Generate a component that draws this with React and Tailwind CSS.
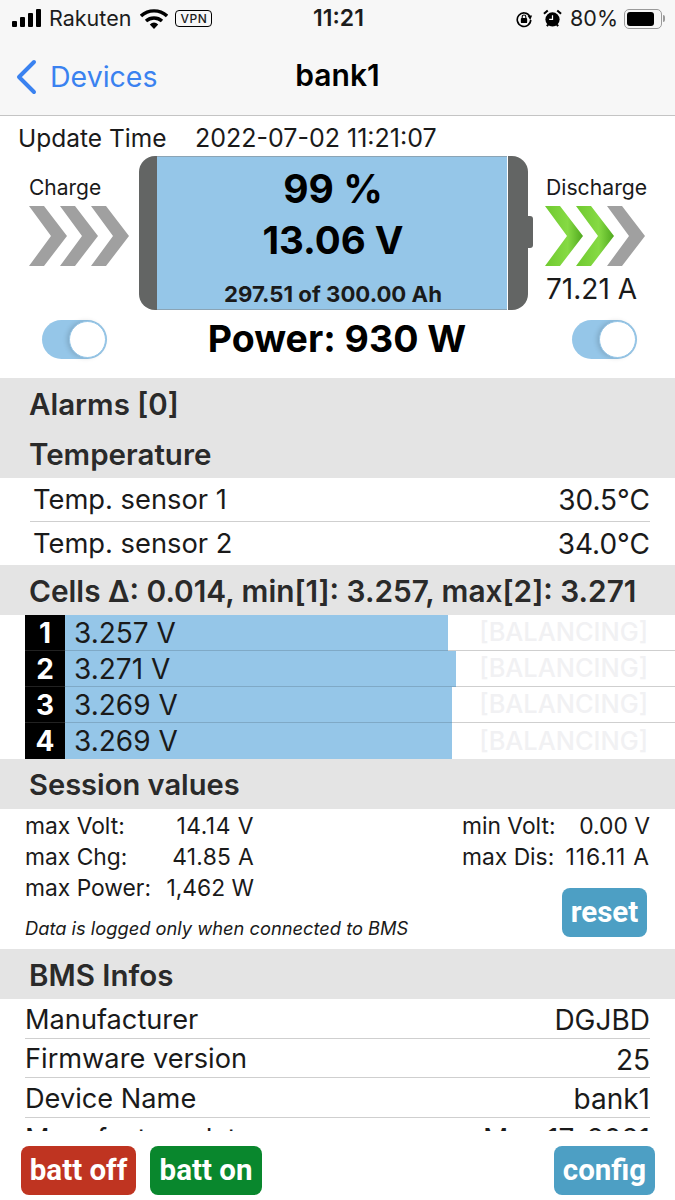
import React from "react";

const SANS = "font-['Inter','Noto_Sans',sans-serif]";

function Chevrons({ green = 0 }) {
  const xs = [0, 31, 62];
  return (
    <svg width="101" height="60" viewBox="0 0 101 60" className="block">
      <defs>
        <linearGradient id="g" x1="0" x2="1" y1="0" y2="0">
          <stop offset="0" stopColor="#6fc92f" />
          <stop offset="0.6" stopColor="#86da44" />
          <stop offset="1" stopColor="#4fa81e" />
        </linearGradient>
      </defs>
      {xs.map((x, i) => (
        <polygon
          key={x}
          points={`${x},0 ${x + 15},0 ${x + 38},30 ${x + 15},60 ${x},60 ${x + 22},30`}
          fill={i < green ? "url(#g)" : "#a0a0a0"}
        />
      ))}
    </svg>
  );
}

function Toggle() {
  return (
    <div className="relative h-[39px] w-[65px] rounded-full bg-[#95c6e8]">
      <div className="absolute right-[1px] top-[1px] h-[37px] w-[37px] rounded-full border border-[#95c6e8] bg-white shadow-[-2px_0_5px_rgba(0,0,0,0.15)]" />
    </div>
  );
}

function Header({ size = "text-[29.5px]", children }) {
  return (
    <div className={`flex h-[50px] items-center bg-[#e4e4e4] pl-[29px] pt-[2px] font-semibold text-[#2a2a2a] ${size}`}>
      {children}
    </div>
  );
}

function TempRow({ label, value, border }) {
  return (
    <div className="ml-[30px] mr-[25px]">
      <div className={`flex items-center justify-between pl-[3px] pt-[1px] text-[#1a1a1a] ${border ? "h-[44px] border-b border-[#cfcfcf]" : "h-[43px]"}`}>
        <span className="text-[27.3px]">{label}</span>
        <span className="text-[28px]">{value}</span>
      </div>
    </div>
  );
}

function Cell({ n, v, w, last }) {
  return (
    <div className="flex h-[36px] pl-[25px]">
      <div className={`flex w-[40px] items-center justify-center bg-black text-[28px] font-bold text-white ${last ? "" : "border-b border-[#222]"}`}>
        {n}
      </div>
      <div className={`relative flex-1 ${last ? "" : "border-b border-[#cfcfcf]"}`}>
        <div className="absolute inset-y-0 left-0 bg-[#95c6e8]" style={{ width: w }} />
        {!last && <div className="absolute inset-x-0 bottom-[-1px] h-px bg-[#7fa9c6]" style={{ width: w }} />}
        <div className="relative flex h-full items-center justify-between pl-[9px] pr-[27px]">
          <span className="text-[28px] text-[#1a1a1a]">{v}</span>
          <span className="text-[25.4px] font-medium text-[#f1f1f3]">[BALANCING]</span>
        </div>
      </div>
    </div>
  );
}

function InfoRow({ label, value, border = true }) {
  return (
    <div className="ml-[25px] mr-[25px]">
      <div className={`flex h-[39.5px] items-center justify-between pt-[4px] text-[#1a1a1a] ${border ? "border-b border-[#cfcfcf]" : ""}`}>
        <span className="text-[27.2px]">{label}</span>
        <span className="text-[28px]">{value}</span>
      </div>
    </div>
  );
}

function Btn({ cls, w, children }) {
  return (
    <div className={`flex h-[49px] items-center justify-center rounded-[8px] font-['Roboto',sans-serif] text-[29.5px] font-bold text-white ${w} ${cls}`}>
      {children}
    </div>
  );
}

function SessionLine({ label, value, track = "" }) {
  return (
    <div className="flex h-[31px] items-center whitespace-nowrap text-[22.8px] text-[#1a1a1a]">
      <span>{label}</span>
      <span className={`flex-1 text-right ${track}`}>{value}</span>
    </div>
  );
}

export default function App() {
  return (
    <div className={`flex h-[1200px] w-[675px] flex-col overflow-hidden bg-white ${SANS}`}>
      {/* status + nav */}
      <div className="shrink-0 border-b border-[#c4c4c4] bg-[#f7f7f7]">
        <div className="flex h-[37px] items-center justify-between pl-[12px] pr-[10px] text-[21.5px] text-[#1c1c1c]">
          <div className="flex w-[250px] items-center">
            <svg width="30" height="19" viewBox="0 0 30 19" className="block">
              <rect x="0" y="12" width="5" height="6" rx="1" fill="#000" />
              <rect x="8" y="8" width="5" height="10" rx="1" fill="#000" />
              <rect x="16" y="4" width="5" height="14" rx="1" fill="#000" />
              <rect x="24" y="0" width="5" height="18" rx="1" fill="#000" />
            </svg>
            <span className="ml-[7px]">Rakuten</span>
            <svg width="28" height="20" viewBox="0 0 28 20" className="ml-[9px] block">
              <path d="M1 7 A19 19 0 0 1 27 7" fill="none" stroke="#000" strokeWidth="3.4" />
              <path d="M6 12 A12 12 0 0 1 22 12" fill="none" stroke="#000" strokeWidth="3.4" />
              <path d="M9.8 15.4 A6.5 6.5 0 0 1 18.2 15.4 L14 20 Z" fill="#000" />
            </svg>
            <div className="ml-[7px] flex h-[17px] w-[37px] items-center justify-center rounded-[4px] border border-black text-[12px] font-medium tracking-[0.5px]">
              VPN
            </div>
          </div>
          <span className="text-[23px] font-semibold">11:21</span>
          <div className="flex w-[250px] items-center justify-end">
            <svg width="18" height="18" viewBox="0 0 20 20" className="block">
              <path d="M16.5 7 A7.5 7.5 0 1 0 17.5 11" fill="none" stroke="#000" strokeWidth="1.8" />
              <path d="M14 6.5 L19 6 L17 11 Z" fill="#000" />
              <rect x="6.5" y="9" width="7" height="5.5" rx="1" fill="#000" />
              <path d="M8 9 V7.5 a2 2 0 0 1 4 0 V9" fill="none" stroke="#000" strokeWidth="1.2" />
            </svg>
            <svg width="19" height="19" viewBox="0 0 20 20" className="ml-[10px] block">
              <circle cx="10" cy="11" r="7.5" fill="#000" />
              <path d="M10 6.5 V11 H6.5" fill="none" stroke="#fff" strokeWidth="1.3" />
              <path d="M1 5 L5 1.5 M19 5 L15 1.5 M4 18 L5.5 16.5 M16 18 L14.5 16.5" stroke="#000" strokeWidth="2.2" />
            </svg>
            <span className="ml-[8px]">80%</span>
            <div className="ml-[6px] flex h-[20px] w-[38px] items-center rounded-[5px] border-[1.5px] border-[#9a9a9a] p-[2px]">
              <div className="h-full w-[85%] rounded-[3px] bg-black" />
            </div>
            <div className="ml-[1px] h-[7px] w-[2px] rounded-r bg-[#9a9a9a]" />
          </div>
        </div>
        <div className="relative flex h-[78px] items-center justify-center pb-[2px]">
          <div className="absolute left-[15px] top-[19px] flex items-center">
            <svg width="22" height="36" viewBox="0 0 22 36" className="block">
              <path d="M19 3 L4 18 L19 33" fill="none" stroke="#3a82f0" strokeWidth="4" strokeLinecap="round" strokeLinejoin="round" />
            </svg>
            <span className="ml-[13px] text-[28.5px] text-[#3a82f0]">Devices</span>
          </div>
          <span className="text-[30px] font-semibold text-black">bank1</span>
        </div>
      </div>

      {/* overview */}
      <div className="shrink-0 px-[19px] pt-[6px]">
        <div className="flex h-[34px] items-center text-[25px] text-[#1a1a1a]">
          <span className="ml-[-1px] w-[177px] pb-[2px] text-[24.5px]">Update Time</span>
          <span>2022-07-02 11:21:07</span>
        </div>
        <div className="flex h-[154px] items-start">
          <div className="flex w-[120px] flex-col">
            <div className="ml-[10px] mt-[17px] text-[21px] leading-[30px] text-[#1a1a1a]">Charge</div>
            <div className="ml-[10px] mt-[3px]"><Chevrons /></div>
          </div>
          <div className="flex h-[154px]">
            <div className="w-[18px] rounded-l-[16px] bg-[#636564]" />
            <div className="relative flex w-[350px] flex-col items-center border-y border-[#8ba4b5] bg-[#95c6e8] pl-[2px] text-black">
              <div className="mt-[7px] text-[39px] font-bold leading-[50px]">99 %</div>
              <div className="text-[38.5px] font-bold leading-[52px]">13.06 V</div>
              <div className="absolute bottom-[0px] text-[22.2px] font-bold leading-[30px] text-[#1a1a1a]">297.51 of 300.00 Ah</div>
            </div>
            <div className="ml-[1px] w-[20px] rounded-r-[16px] bg-[#636564]" />
            <div className="mt-[60px] h-[32px] w-[5px] rounded-r-[3px] bg-[#636564]" />
          </div>
          <div className="ml-[13px] flex flex-col">
            <div className="mt-[16px] whitespace-nowrap text-[21.2px] leading-[30px] text-[#1a1a1a]">Discharge</div>
            <div className="ml-[-1px] mt-[4px]"><Chevrons green={2} /></div>
            <div className="mt-[5px] whitespace-nowrap text-[28px] leading-[36px] text-[#1a1a1a]">71.21 A</div>
          </div>
        </div>
        <div className="flex h-[68px] items-start pt-[10px]">
          <div className="ml-[23px] w-[97px]"><Toggle /></div>
          <div className="w-[396px] text-center text-[37.5px] font-bold leading-[38px] text-black">Power: 930 W</div>
          <div className="ml-[37px]"><Toggle /></div>
        </div>
      </div>

      {/* scrolling content */}
      <div className="min-h-0 flex-1 overflow-hidden">
        <Header>Alarms [0]</Header>
        <Header>Temperature</Header>
        <TempRow label="Temp. sensor 1" value="30.5°C" border />
        <TempRow label="Temp. sensor 2" value="34.0°C" />
        <Header size="text-[29.8px]">Cells Δ: 0.014, min[1]: 3.257, max[2]: 3.271</Header>
        <div>
          <Cell n="1" v="3.257 V" w={383} />
          <Cell n="2" v="3.271 V" w={391} />
          <Cell n="3" v="3.269 V" w={387} />
          <Cell n="4" v="3.269 V" w={387} last />
        </div>
        <Header size="text-[29.1px]">Session values</Header>
        <div className="flex h-[140px] pl-[25px] pr-[25px] pt-[2px]">
          <div className="flex w-[384px] flex-col">
            <div className="w-[229px]">
              <SessionLine label="max Volt:" value="14.14 V" track="tracking-[0.5px]" />
              <SessionLine label="max Chg:" value="41.85 A" track="tracking-[0.3px]" />
              <SessionLine label="max Power:" value="1,462 W" />
            </div>
            <div className="mt-[11px] text-[18.3px] italic text-[#1a1a1a]">Data is logged only when connected to BMS</div>
          </div>
          <div className="ml-[53px] flex flex-1 flex-col">
            <SessionLine label="min Volt:" value="0.00 V" />
            <SessionLine label="max Dis:" value="116.11 A" track="tracking-[0.9px]" />
            <div className="mt-[15px] flex justify-end pr-[3px]">
              <Btn cls="bg-[#4d9fc4]" w="w-[85px]">reset</Btn>
            </div>
          </div>
        </div>
        <Header>BMS Infos</Header>
        <InfoRow label="Manufacturer" value="DGJBD" />
        <InfoRow label="Firmware version" value="25" />
        <InfoRow label="Device Name" value="bank1" />
        <InfoRow label="Manufacture date" value="May 17, 2021" border={false} />
      </div>

      {/* footer */}
      <div className="flex h-[69px] shrink-0 items-start justify-between bg-white pl-[21px] pr-[20px] pt-[15px]">
        <div className="flex gap-[14px]">
          <Btn cls="bg-[#bf3421]" w="w-[115px]">batt off</Btn>
          <Btn cls="bg-[#09872d]" w="w-[112px]">batt on</Btn>
        </div>
        <Btn cls="bg-[#4d9fc4]" w="w-[101px]">config</Btn>
      </div>
    </div>
  );
}
